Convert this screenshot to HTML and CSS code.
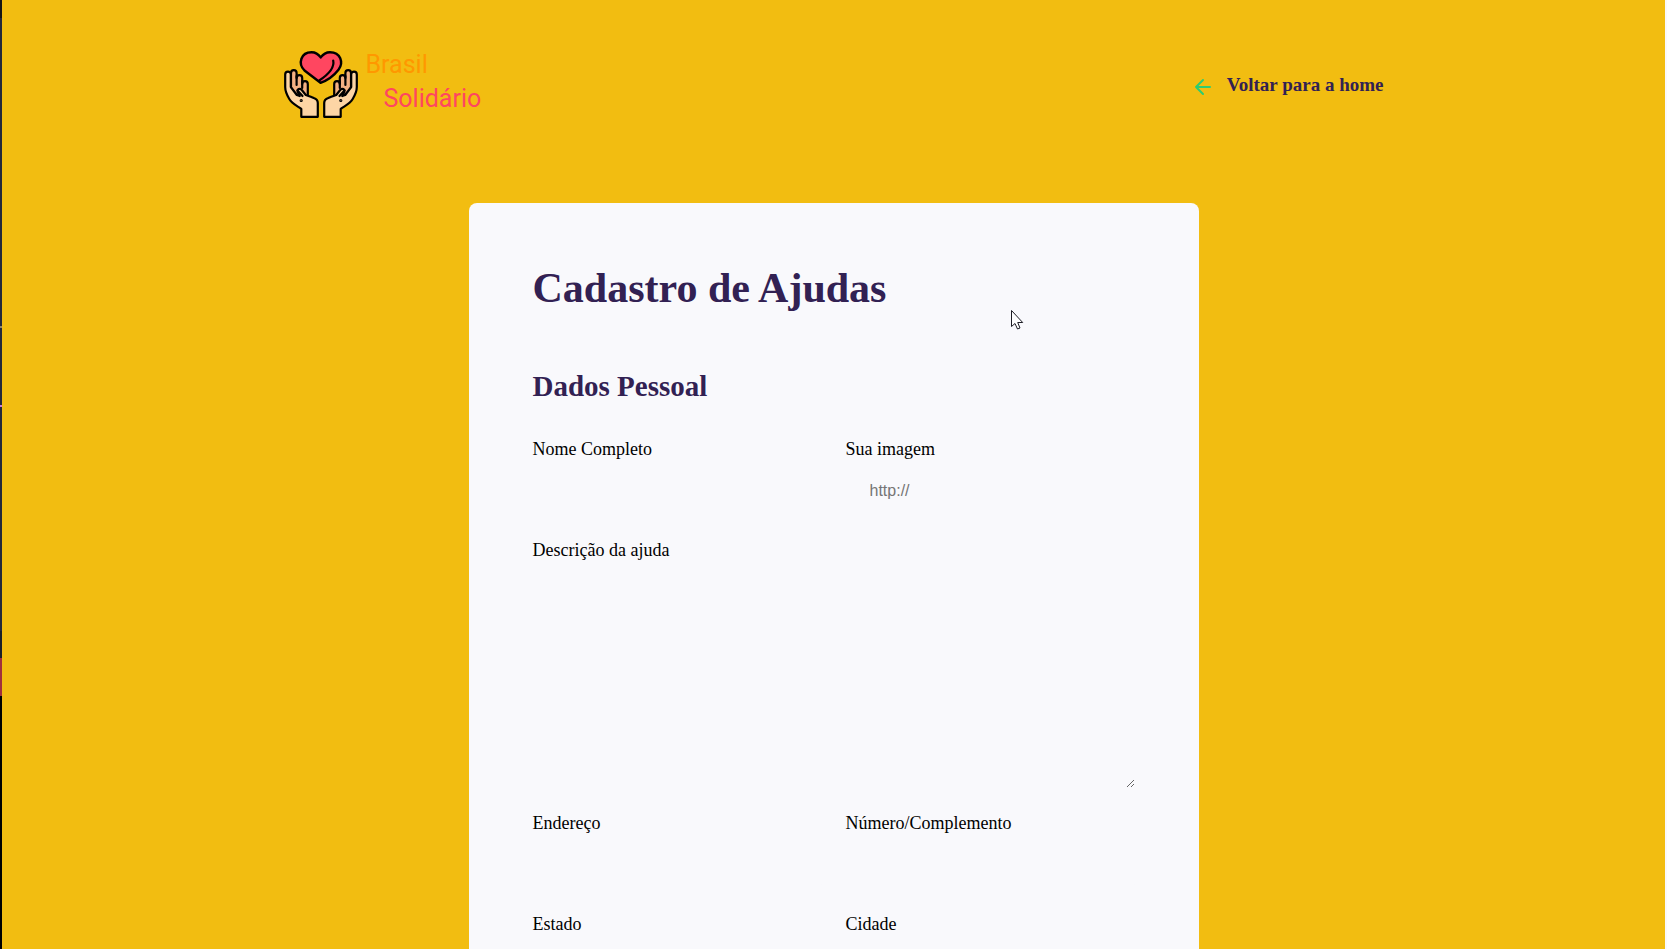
FILE: index.html
```html
<!DOCTYPE html>
<html lang="pt-BR">
<head>
<meta charset="utf-8">
<title>Brasil Solidário - Cadastro de Ajudas</title>
<link rel="stylesheet" href="styles.css">
</head>
<body>
<div class="page">
  <header class="header">
    <a class="logo" href="#" aria-label="Brasil Solidário">
      <svg class="logo-mark" viewBox="0 0 74 67" aria-hidden="true">
        <defs>
          <g id="hand" stroke="#000" stroke-width="2.2" stroke-linejoin="round" stroke-linecap="round">
            <path fill="#f3b083" d="M7 38V22a2.800 2.800 0 0 1 5.600 0v5a2.800 2.800 0 0 1 5.600 0v6a2.800 2.800 0 0 1 5.600 0v12L15 46z"/>
            <path fill="none" d="M12.600 25v9M18.200 30v7"/>
            <path fill="#fdd5a5" d="M1.200 23.500a2.800 2.800 0 0 1 5.600 0V36l6 8 3 1-2-4c-1-3 2-4 4-2l4 5c3 1 6 2 8 3 3 1 4 3 4 5v13.800H17.300V58c-4-3-9-5-12-10-3-5-4.100-8-4.100-12z"/>
            <path fill="none" d="M13.500 39.500l5 5.500"/>
            <circle cx="17.200" cy="49.500" r=".5" fill="#000"/>
          </g>
        </defs>
        <use href="#hand"/>
        <use href="#hand" transform="translate(74 0) scale(-1 1)"/>
        <path d="M36.500 31.800L20.500 19.500C13.500 12.500 17 1.200 27.500 1.200c4 0 7 2 9.200 5.200C39 3.200 42 1.200 46 1.200c10.500 0 14 10.500 8.500 17.500C50 24.500 44.500 29 36.500 31.800z" fill="#ff4660" stroke="#000" stroke-width="2.400" stroke-linejoin="round"/>
        <path d="M49.200 9.500c1.500 7-4 13.500-14 20" fill="none" stroke="#000" stroke-width="2.200" stroke-linecap="round"/>
      </svg>
      <span class="logo-text"><span class="logo-brasil">Brasil</span><span class="logo-solidario">Solidário</span></span>
    </a>
    <a class="back" href="#">
      <svg class="back-icon" viewBox="0 0 24 24" aria-hidden="true"><path d="M19 12H5M12 19l-7-7 7-7"/></svg>
      <span>Voltar para a home</span>
    </a>
  </header>

  <form class="card">
    <h1 class="title">Cadastro de Ajudas</h1>
    <fieldset class="group">
      <legend class="subtitle">Dados Pessoal</legend>
      <div class="fields">
        <div class="field"><label for="name">Nome Completo</label><input id="name" type="text"></div>
        <div class="field"><label for="image">Sua imagem</label><input id="image" type="text" placeholder="http://"></div>
        <div class="field wide"><label for="description">Descrição da ajuda</label><textarea id="description"></textarea></div>
        <div class="field"><label for="address">Endereço</label><input id="address" type="text"></div>
        <div class="field"><label for="number">Número/Complemento</label><input id="number" type="text"></div>
        <div class="field"><label for="state">Estado</label><input id="state" type="text"></div>
        <div class="field"><label for="city">Cidade</label><input id="city" type="text"></div>
      </div>
    </fieldset>
  </form>
</div>
<svg class="pointer" viewBox="0 0 13 20" aria-hidden="true"><path d="M.5.500v16l3.500-3 2.500 5.500 2.500-1-2.300-5.500h5z"/></svg>
</body>
</html>
```
FILE: styles.css
```css
* { box-sizing: border-box; }

body {
  margin: 0;
  height: 100vh;
  overflow: hidden;
  position: relative;
  padding: 0 2px;
  background:
    linear-gradient(#151515 0 18px, #23273a 18px 326px, #8f8570 326px 328px, #23273a 328px 405px, #c77ae0 405px 407px, #23273a 407px 631px, #1a1f29 631px 658px, #a0303c 658px 696px, #000 696px) left / 2px 100% no-repeat,
    linear-gradient(#f9f9fc, #f9f9fc) right / 2px 100% no-repeat,
    #f2bd11;
  font-family: "Liberation Serif", serif;
  color: #000;
}

.page {
  width: 100%;
  max-width: 1100px;
  margin: 0 auto;
}

.header {
  display: flex;
  align-items: center;
  justify-content: space-between;
  padding-top: 48px;
}

a { text-decoration: none; }

.logo {
  display: flex;
  align-items: center;
  gap: 8px;
}

.logo-mark {
  width: 74px;
  height: 67px;
  margin-bottom: 2px;
}

.logo-text {
  display: flex;
  flex-direction: column;
  font: 25px/34px Roboto, sans-serif;
  padding-bottom: 6px;
}

.logo-brasil { color: #ff9800; }

.logo-solidario {
  color: #ff4660;
  padding-left: 18px;
}

.back {
  display: flex;
  align-items: center;
  gap: 12px;
  color: #322153;
  font-size: 19px;
  font-weight: bold;
}

.back-icon {
  width: 24px;
  height: 24px;
  margin-top: 4px;
  fill: none;
  stroke: #2ecc71;
  stroke-width: 2;
  stroke-linecap: round;
  stroke-linejoin: round;
}

.card {
  max-width: 730px;
  margin: 81px auto 0;
  padding: 63px 64px 64px;
  background: #f9f9fc;
  border-radius: 8px;
}

.title {
  margin: 0;
  color: #322153;
  font-size: 42px;
  line-height: 44px;
}

.group {
  margin: 60px 0 0;
  padding: 0;
  border: 0;
  min-width: 0;
}

.subtitle {
  padding: 0;
  margin-bottom: 37px;
  color: #322153;
  font-size: 29px;
  font-weight: bold;
  line-height: 32px;
}

.fields {
  display: grid;
  grid-template-columns: 1fr 1fr;
  gap: 25px 24px;
}

.field {
  display: flex;
  flex-direction: column;
  gap: 7px;
}

.wide { grid-column: 1 / -1; }

label {
  font-size: 18px;
  line-height: 20px;
}

input,
textarea {
  width: 100%;
  border: 0;
  border-radius: 8px;
  outline: 0;
  padding: 0 24px;
  background: #f9f9fc;
  color: #6c6c80;
  font: 16px "Liberation Sans", Arial, sans-serif;
}

input { height: 49px; }

input::placeholder { color: #757575; }

textarea {
  height: 221px;
  padding: 16px 24px;
  resize: vertical;
}

.pointer {
  position: absolute;
  left: 1011px;
  top: 310px;
  width: 13px;
  height: 20px;
  fill: #fff;
  stroke: #1c1c24;
  stroke-width: 1;
}
```
